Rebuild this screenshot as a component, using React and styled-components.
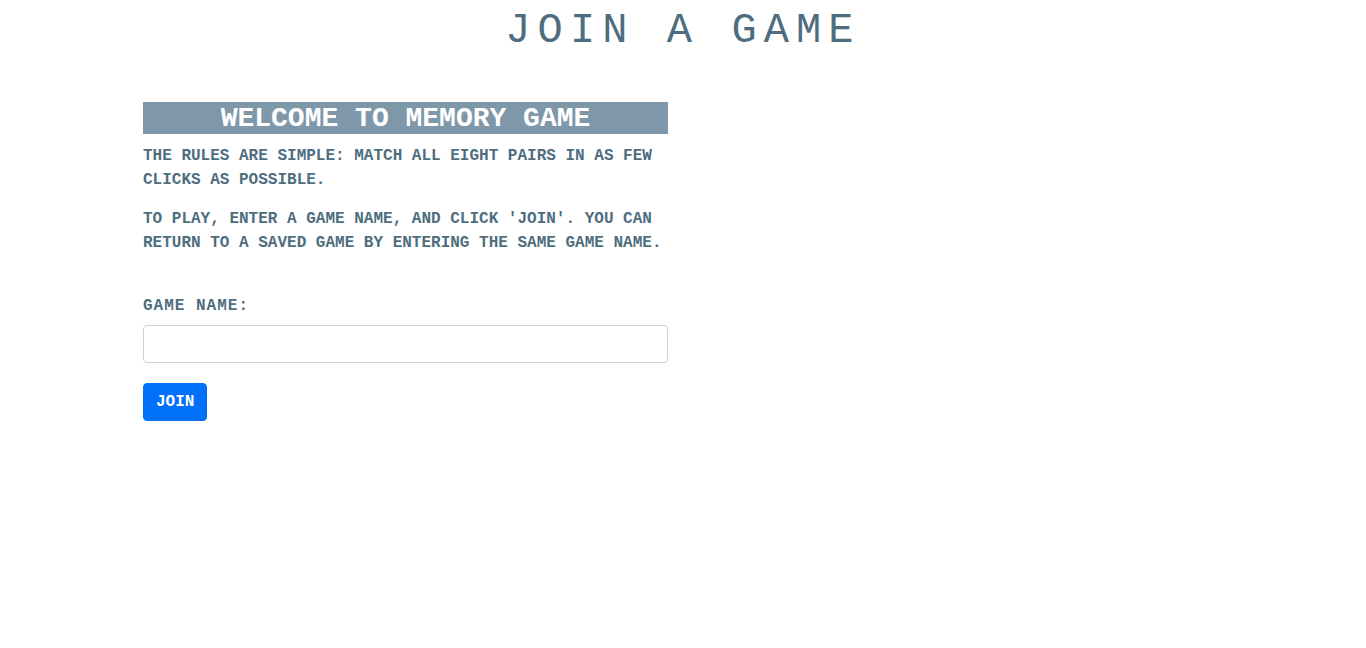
import React, { useState } from 'react';
import styled, { createGlobalStyle } from 'styled-components';

const GlobalStyle = createGlobalStyle`
  html, body {
    margin: 0;
    padding: 0;
    background: #ffffff;
  }
  body {
    font-family: "Liberation Mono", "Courier New", monospace;
    color: #4e6e80;
  }
  * {
    box-sizing: border-box;
  }
`;

const Page = styled.div`
  min-height: 648px;
  padding-top: 6px;
`;

const PageTitle = styled.h1`
  margin: 0;
  text-align: center;
  font-size: 42px;
  font-weight: 400;
  letter-spacing: 7.1px;
  line-height: 50px;
  color: #4e6e80;
  text-transform: uppercase;
`;

const Container = styled.div`
  max-width: 1080px;
  margin: 46px auto 0;
  display: grid;
  grid-template-columns: 525px 525px;
  column-gap: 30px;
`;

const Column = styled.div`
  display: flex;
  flex-direction: column;
`;

const Banner = styled.h3`
  margin: 0;
  height: 32px;
  line-height: 34px;
  background: #7f98a9;
  color: #ffffff;
  text-align: center;
  font-size: 28px;
  font-weight: 700;
  text-transform: uppercase;
`;

const Rule = styled.p`
  margin: ${(p) => (p.$first ? '10px' : '0')} 0 15px;
  font-size: 16px;
  font-weight: 700;
  line-height: 24px;
  text-transform: uppercase;
  color: #4e6e80;
`;

const Form = styled.form`
  display: flex;
  flex-direction: column;
  margin-top: 24px;
`;

const Label = styled.label`
  font-size: 16px;
  font-weight: 700;
  letter-spacing: 1px;
  line-height: 24px;
  margin-bottom: 7px;
  text-transform: uppercase;
`;

const Input = styled.input`
  width: 100%;
  height: 38px;
  padding: 6px 12px;
  border: 1px solid #ced4da;
  border-radius: 4px;
  font-family: inherit;
  font-size: 16px;
  color: #495057;
  outline: none;

  &:focus {
    border-color: #80bdff;
  }
`;

const JoinButton = styled.button`
  align-self: flex-start;
  margin-top: 20px;
  height: 38px;
  padding: 6px 12px;
  border: 1px solid #0070f8;
  border-radius: 4px;
  background: #0070f8;
  color: #ffffff;
  font-family: inherit;
  font-size: 16px;
  font-weight: 700;
  text-transform: uppercase;
  cursor: pointer;
`;

export default function App() {
  const [gameName, setGameName] = useState('');

  const handleSubmit = (event) => {
    event.preventDefault();
  };

  return (
    <>
      <GlobalStyle />
      <Page>
        <PageTitle>Join a Game</PageTitle>
        <Container>
          <Column>
            <Banner>Welcome to Memory Game</Banner>
            <Rule $first>
              The rules are simple: match all eight pairs in as few clicks as possible.
            </Rule>
            <Rule>
              To play, enter a game name, and click 'join'. You can return to a saved game by
              entering the same game name.
            </Rule>
            <Form onSubmit={handleSubmit}>
              <Label htmlFor="game-name">Game name:</Label>
              <Input
                id="game-name"
                value={gameName}
                onChange={(e) => setGameName(e.target.value)}
              />
              <JoinButton type="submit">Join</JoinButton>
            </Form>
          </Column>
          <Column />
        </Container>
      </Page>
    </>
  );
}
